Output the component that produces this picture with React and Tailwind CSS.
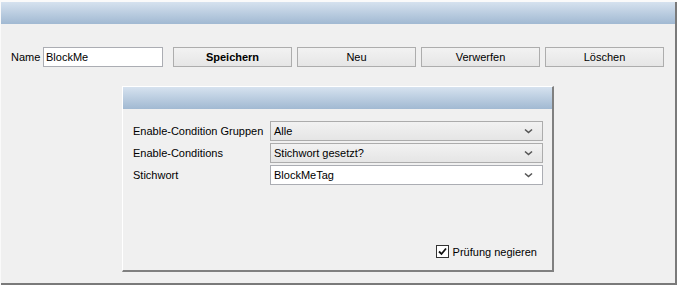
import React, { useState } from "react";

const font = { fontFamily: '"Liberation Sans", Arial, sans-serif' };

const Chevron = () => (
  <svg width="9" height="6" viewBox="0 0 9 6" className="text-[#555]">
    <path d="M1 1.5 L4.5 4.5 L8 1.5" fill="none" stroke="currentColor" strokeWidth="1.6" />
  </svg>
);

const Combo = ({ value, editable }) => (
  <div
    className={`flex h-[20px] w-[273px] items-center justify-between border pl-[3px] pr-[9px] ${
      editable
        ? "border-[#abadb3] bg-white"
        : "border-[#acacac] bg-gradient-to-b from-[#f2f2f2] to-[#e5e5e5]"
    }`}
  >
    <span className="text-[11px] text-black">{value}</span>
    <Chevron />
  </div>
);

const Button = ({ children, bold }) => (
  <button
    className={`h-[20px] w-[119px] border border-[#adadad] bg-gradient-to-b from-[#f2f2f2] to-[#e6e6e6] text-[11px] text-black ${
      bold ? "font-bold" : ""
    }`}
  >
    {children}
  </button>
);

const Header = () => (
  <div className="h-[22px] bg-gradient-to-b from-[#d6e2ef] to-[#a1b9d2]" />
);

export default function App() {
  const [negate, setNegate] = useState(true);

  const rows = [
    { label: "Enable-Condition Gruppen", value: "Alle" },
    { label: "Enable-Conditions", value: "Stichwort gesetzt?" },
    { label: "Stichwort", value: "BlockMeTag", editable: true },
  ];

  return (
    <div style={font} className="h-[285px] w-[677px] bg-[#fafafa] pt-[2px] pl-[1px]">
      <div className="flex h-[283px] w-[676px] flex-col border-r-2 border-b-2 border-[#7a7a7a] bg-[#f0f0f0]">
        <Header />

        <div className="mt-[23px] flex items-center pl-[10px]">
          <span className="w-[32px] text-[11px] text-black">Name</span>
          <div className="flex h-[20px] w-[120px] items-center border border-[#abadb3] bg-white pl-[2px] text-[11px]">
            BlockMe
          </div>
          <div className="ml-[10px] flex gap-[5px]">
            <Button bold>Speichern</Button>
            <Button>Neu</Button>
            <Button>Verwerfen</Button>
            <Button>Löschen</Button>
          </div>
        </div>

        <div className="ml-[121px] mt-[19px] flex h-[186px] w-[432px] flex-col border-t border-l border-white border-r-2 border-b-2 border-r-[#808080] border-b-[#808080]">
          <Header />
          <div className="mt-[12px] flex flex-col gap-[2px] pl-[10px] pr-[9px]">
            {rows.map((r) => (
              <div key={r.label} className="flex items-center justify-between">
                <span className="text-[11px] text-black">{r.label}</span>
                <Combo value={r.value} editable={r.editable} />
              </div>
            ))}
          </div>
          <div className="mt-auto mb-[10px] flex items-center justify-end pr-[15px]">
            <button
              onClick={() => setNegate(!negate)}
              className="flex h-[13px] w-[13px] items-center justify-center border border-[#333] bg-white"
            >
              {negate && (
                <svg width="9" height="9" viewBox="0 0 9 9">
                  <path d="M1 4.5 L3.5 7 L8 1.5" fill="none" stroke="#111" strokeWidth="1.8" />
                </svg>
              )}
            </button>
            <span className="ml-[4px] text-[11px] text-black">Prüfung negieren</span>
          </div>
        </div>
      </div>
    </div>
  );
}
